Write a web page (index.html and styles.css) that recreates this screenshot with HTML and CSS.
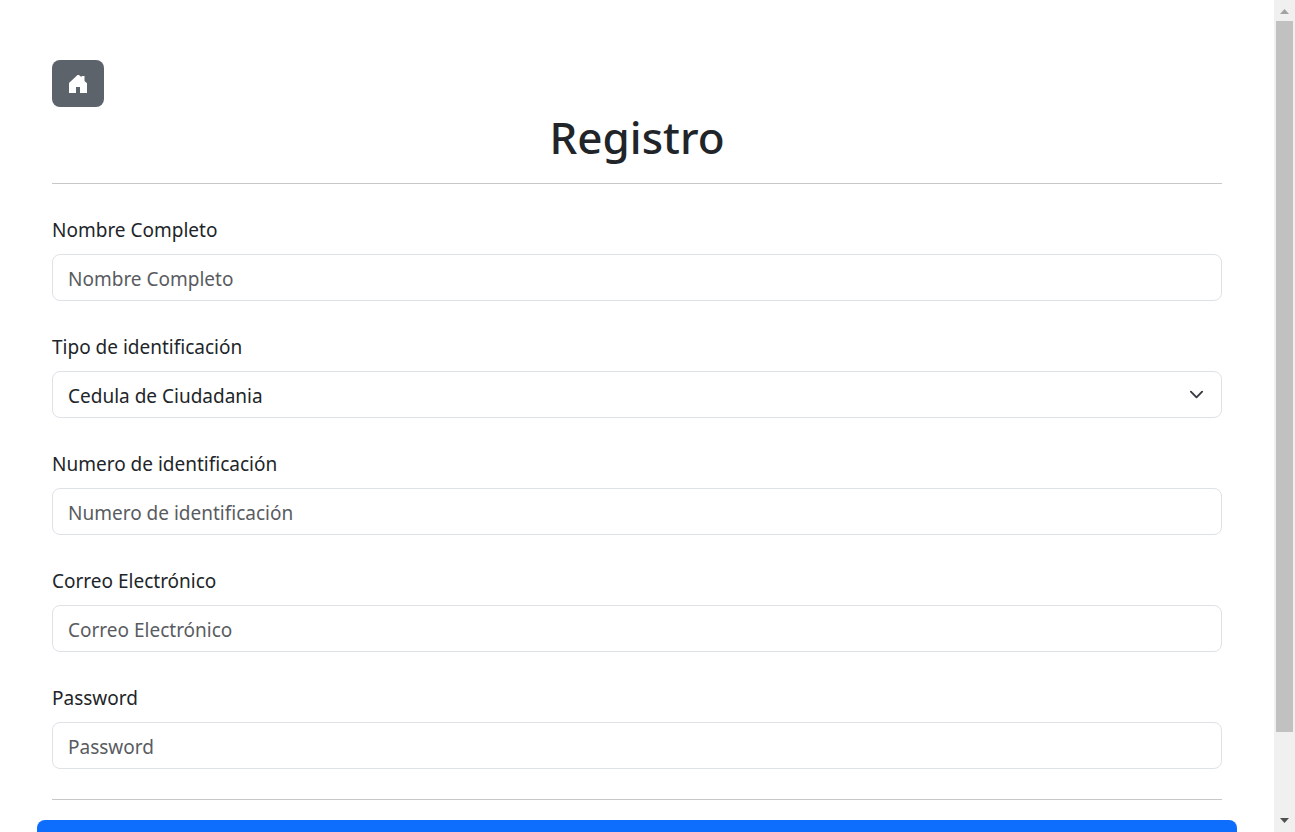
FILE: index.html
```html
<!DOCTYPE html>
<html lang="es">
<head>
  <meta charset="utf-8">
  <meta name="viewport" content="width=device-width, initial-scale=1">
  <title>Registro</title>
  <link rel="stylesheet" href="styles.css">
</head>
<body>
  <main class="page">
    <form class="register">
      <div class="register-body">
        <a class="home-button" href="#" aria-label="Inicio">
          <svg class="home-icon" viewBox="0 0 18 18" aria-hidden="true"><path d="M8.500 0h1.500L12.500 2.300V1H15.500v5L18 8.200V18h-7v-6H7v6H0V8z"/></svg>
        </a>
        <h1 class="title">Registro</h1>
        <hr class="divider">
        <div class="fields">
          <div class="field">
            <label for="nombre">Nombre Completo</label>
            <input class="control" id="nombre" type="text" placeholder="Nombre Completo">
          </div>
          <div class="field">
            <label for="tipo">Tipo de identificación</label>
            <div class="select-box">
              <select class="control" id="tipo">
                <option>Cedula de Ciudadania</option>
              </select>
              <svg class="chevron" viewBox="0 0 16 16" aria-hidden="true"><path d="M2 5l6 6 6-6"/></svg>
            </div>
          </div>
          <div class="field">
            <label for="numero">Numero de identificación</label>
            <input class="control" id="numero" type="text" placeholder="Numero de identificación">
          </div>
          <div class="field">
            <label for="correo">Correo Electrónico</label>
            <input class="control" id="correo" type="email" placeholder="Correo Electrónico">
          </div>
          <div class="field">
            <label for="password">Password</label>
            <input class="control" id="password" type="password" placeholder="Password">
          </div>
        </div>
        <hr class="divider">
      </div>
      <button class="submit" type="submit" aria-label="Registrarse"></button>
    </form>
  </main>
  <div class="scrollbar" aria-hidden="true">
    <svg class="arrow arrow-up" viewBox="0 0 9 5"><path d="M0 5L4.500 0 9 5z"/></svg>
    <div class="track"><div class="thumb"></div></div>
    <svg class="arrow arrow-down" viewBox="0 0 9 5"><path d="M0 0h9L4.500 5z"/></svg>
  </div>
</body>
</html>
```

FILE: styles.css
```css
* {
  box-sizing: border-box;
}

body {
  display: flex;
  height: 100vh;
  margin: 0;
  overflow: hidden;
  background: #fff;
  color: #212529;
  font: 400 19px/30px "Segoe UI", "Noto Sans", sans-serif;
}

.page {
  flex: 1;
  min-width: 0;
  overflow: hidden;
  padding: 60px 37px;
}

.register-body {
  padding: 0 15px;
}

.home-button {
  display: flex;
  align-items: center;
  justify-content: center;
  width: 52px;
  height: 47px;
  border-radius: 8px;
  background: #5c636a;
  color: #fff;
}

.home-icon {
  width: 18px;
  height: 18px;
  fill: currentColor;
}

.title {
  margin: 0 0 16px;
  font-size: 44px;
  font-weight: 500;
  line-height: 60px;
  text-align: center;
}

.divider {
  margin: 0;
  border: 0;
  border-top: 1px solid #c7c8c9;
}

.fields {
  display: grid;
  gap: 31px;
  padding: 31px 0 30px;
}

.field {
  display: grid;
  gap: 9px;
}

.control {
  display: block;
  width: 100%;
  height: 47px;
  margin: 0;
  padding: 2px 15px 0;
  border: 1px solid #dee2e6;
  border-radius: 8px;
  background: #fff;
  color: inherit;
  font: inherit;
  appearance: none;
}

.control::placeholder {
  color: #595c5f;
  opacity: 1;
}

.select-box {
  position: relative;
}

.chevron {
  position: absolute;
  top: 16px;
  right: 18px;
  width: 15px;
  height: 15px;
  fill: none;
  stroke: #343a40;
  stroke-width: 2;
  stroke-linecap: round;
  stroke-linejoin: round;
  pointer-events: none;
}

.submit {
  display: block;
  width: 100%;
  height: 47px;
  margin-top: 20px;
  border: 0;
  border-radius: 8px;
  background: #0d6efd;
}

.scrollbar {
  display: flex;
  flex-direction: column;
  align-items: center;
  width: 21px;
  padding: 9px 2px;
  background: #f0f0f0;
}

.arrow {
  width: 9px;
  height: 5px;
}

.arrow-up {
  fill: #a3a3a3;
}

.arrow-down {
  fill: #505050;
}

.track {
  flex: 1;
  width: 100%;
  padding: 7px 0;
}

.thumb {
  height: 90%;
  background: #c1c1c1;
}
```
